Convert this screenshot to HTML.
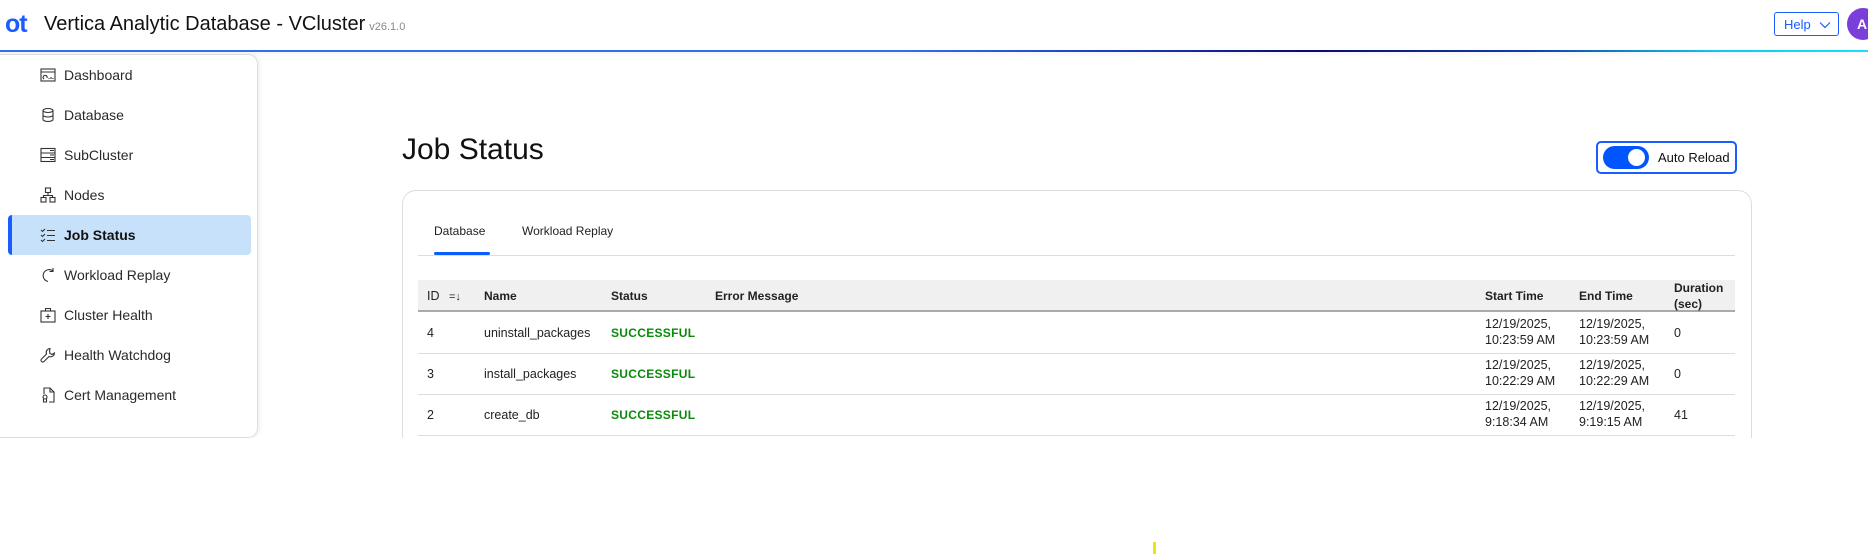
<!DOCTYPE html>
<html><head><meta charset="utf-8">
<style>
*{box-sizing:border-box;margin:0;padding:0}
body{width:1868px;height:554px;background:#fff;font-family:"Liberation Sans",Arial,sans-serif;color:#1a1a1a;position:relative;overflow:hidden}
.abs{position:absolute}
.hdr-line{left:0;top:50px;width:1868px;height:2px;background:linear-gradient(90deg,#3070f0 0%,#3070f0 48%,#1c3cb8 60%,#0a0a70 70%,#1040a8 82%,#10c8f0 92%,#18e0f8 100%);box-shadow:0 2px 4px rgba(0,0,0,.08)}
.logo{left:5px;top:11px;font-size:25px;font-weight:bold;color:#1a5cff;letter-spacing:-1px;line-height:26px}
.title{left:44px;top:13px;font-size:20px;color:#111}
.ver{font-size:11px;color:#888;margin-left:4px}
.help{left:1774px;top:12px;width:65px;height:24px;border:1px solid #1a5cff;border-radius:3px;color:#1a5cff;font-size:13px;padding:4px 0 0 9px;white-space:nowrap}
.avatar{left:1847px;top:8px;width:32px;height:32px;border-radius:50%;background:#7b3fd9;color:#fff;font-size:14px;font-weight:bold;padding:8px 0 0 10px}
.side{left:-10px;top:54px;width:268px;height:384px;border:1px solid #ddd;border-radius:10px;box-shadow:2px 0 4px rgba(0,0,0,.06);background:#fff}
.item{position:absolute;left:64px;font-size:14px;color:#2a2a2a;height:20px;line-height:20px}
.ico{position:absolute;left:40px;width:16px;height:16px}
.active{left:8px;top:215px;width:243px;height:40px;background:#c8e1fb;border-radius:4px;border-left:4px solid #1a5cff}
h1{position:absolute;left:402px;top:133px;font-size:30px;font-weight:normal;color:#111}
.ar{left:1596px;top:141px;width:141px;height:33px;border:2px solid #1a5cff;border-radius:5px}
.tog{left:1603px;top:146px;width:46px;height:23px;border-radius:12px;background:#0055ff}
.knob{left:1628px;top:149px;width:17px;height:17px;border-radius:50%;background:#fff}
.card{left:402px;top:190px;width:1350px;height:300px;border:1px solid #ddd;border-radius:14px}
.tabline{left:418px;top:255px;width:1317px;height:1px;background:#ddd}
.tabu{left:434px;top:252px;width:56px;height:3px;background:#0a5cff;border-radius:2px}
.th{left:418px;top:280px;width:1317px;height:32px;background:#f0f0f0;border-bottom:2px solid #aaa}
.t{position:absolute;font-size:12.5px;color:#222;line-height:16px}
.b{font-weight:bold;font-size:12px}
.rl{position:absolute;left:418px;width:1317px;height:1px;background:#ddd}
.ok{color:#0a8a0a;font-weight:bold;font-size:12px;letter-spacing:.3px}
</style></head><body>
<div class="abs logo">ot</div>
<div class="abs title">Vertica Analytic Database - VCluster<span class="ver">v26.1.0</span></div>
<div class="abs help">Help<svg width="12" height="8" style="margin-left:8px" viewBox="0 0 12 8"><path d="M1 1.5l5 5 5-5" fill="none" stroke="#1a5cff" stroke-width="1.2"/></svg></div>
<div class="abs avatar">A</div>
<div class="abs hdr-line"></div>

<div class="abs side"></div>
<div class="abs active"></div>
<svg class="ico" style="top:67px" viewBox="0 0 16 16" fill="none" stroke="#333" stroke-width="1.1"><rect x="1" y="2" width="14" height="12"/><path d="M1 5h14M4 12a2 2 0 1 1 3-1M9 12v-1M11 12v-2M13 12v-1"/></svg>
<div class="item" style="top:65px">Dashboard</div>
<svg class="ico" style="top:107px" viewBox="0 0 16 16" fill="none" stroke="#333" stroke-width="1.1"><ellipse cx="8" cy="3.5" rx="5" ry="2"/><path d="M3 3.5v9c0 1.1 2.2 2 5 2s5-.9 5-2v-9M3 8c0 1.1 2.2 2 5 2s5-.9 5-2"/></svg>
<div class="item" style="top:105px">Database</div>
<svg class="ico" style="top:147px" viewBox="0 0 16 16" fill="none" stroke="#333" stroke-width="1.1"><rect x="1" y="1.5" width="14" height="13"/><path d="M1 6h14M1 10.5h14M10 3.5h4M10 8h4M10 12.5h4"/></svg>
<div class="item" style="top:145px">SubCluster</div>
<svg class="ico" style="top:187px" viewBox="0 0 16 16" fill="none" stroke="#333" stroke-width="1.1"><rect x="5.5" y="1" width="5" height="4.5"/><rect x="1" y="10.5" width="5" height="4.5"/><rect x="10" y="10.5" width="5" height="4.5"/><path d="M8 5.5v3M3.5 10.5v-2h9v2"/></svg>
<div class="item" style="top:185px">Nodes</div>
<svg class="ico" style="top:227px" viewBox="0 0 16 16" fill="none" stroke="#333" stroke-width="1.1"><path d="M1 3l1.5 1.5L5 2M1 8l1.5 1.5L5 7M1 13l1.5 1.5L5 12M7 3.5h8M7 8.5h8M7 13.5h8"/></svg>
<div class="item" style="top:225px;color:#111;font-weight:bold">Job Status</div>
<svg class="ico" style="top:267px" viewBox="0 0 16 16" fill="none" stroke="#333" stroke-width="1.1"><path d="M13 4A6 6 0 1 0 8 14.5M13 1v3.5H9.5"/></svg>
<div class="item" style="top:265px">Workload Replay</div>
<svg class="ico" style="top:307px" viewBox="0 0 16 16" fill="none" stroke="#333" stroke-width="1.1"><rect x="1" y="4" width="14" height="11"/><path d="M5.5 4V1.5h5V4M8 7v5M5.5 9.5h5"/></svg>
<div class="item" style="top:305px">Cluster Health</div>
<svg class="ico" style="top:347px" viewBox="0 0 16 16" fill="none" stroke="#333" stroke-width="1.1"><path d="M10 1.5a4 4 0 0 0-3.5 5.5L1.5 12a1.5 1.5 0 0 0 2.5 2.5L9 9.5a4 4 0 0 0 5.5-3.5l-2.5 1.5-2-1-.5-2.5z"/></svg>
<div class="item" style="top:345px">Health Watchdog</div>
<svg class="ico" style="top:387px" viewBox="0 0 16 16" fill="none" stroke="#333" stroke-width="1.1"><path d="M4 7V1h6l4 4v10H9M10 1v4h4"/><circle cx="5" cy="10" r="2"/><path d="M3.5 11.5V15h3v-3.5"/></svg>
<div class="item" style="top:385px">Cert Management</div>

<h1>Job Status</h1>
<div class="abs ar"></div>
<div class="abs tog"></div>
<div class="abs knob"></div>
<div class="abs" style="left:1658px;top:150px;font-size:13px;color:#111">Auto Reload</div>

<div class="abs card"></div>
<div class="abs" style="left:0;top:438px;width:1868px;height:116px;background:#fff"></div>
<div class="abs" style="left:1153px;top:542px;width:3px;height:12px;background:#f5e400"></div>
<div class="t" style="left:434px;top:223px;font-size:12px">Database</div>
<div class="t" style="left:522px;top:223px;font-size:12px">Workload Replay</div>
<div class="abs tabline"></div>
<div class="abs tabu"></div>

<div class="abs th"></div>
<div class="t" style="left:427px;top:288px">ID <span style="margin-left:6px;font-size:11px">=↓</span></div>
<div class="t b" style="left:484px;top:288px">Name</div>
<div class="t b" style="left:611px;top:288px">Status</div>
<div class="t b" style="left:715px;top:288px">Error Message</div>
<div class="t b" style="left:1485px;top:288px">Start Time</div>
<div class="t b" style="left:1579px;top:288px">End Time</div>
<div class="t b" style="left:1674px;top:280px">Duration<br>(sec)</div>

<div class="t" style="left:427px;top:325px">4</div>
<div class="t" style="left:484px;top:325px">uninstall_packages</div>
<div class="t ok" style="left:611px;top:325px">SUCCESSFUL</div>
<div class="t" style="left:1485px;top:316px">12/19/2025,<br>10:23:59 AM</div>
<div class="t" style="left:1579px;top:316px">12/19/2025,<br>10:23:59 AM</div>
<div class="t" style="left:1674px;top:325px">0</div>
<div class="rl" style="top:353px"></div>

<div class="t" style="left:427px;top:366px">3</div>
<div class="t" style="left:484px;top:366px">install_packages</div>
<div class="t ok" style="left:611px;top:366px">SUCCESSFUL</div>
<div class="t" style="left:1485px;top:357px">12/19/2025,<br>10:22:29 AM</div>
<div class="t" style="left:1579px;top:357px">12/19/2025,<br>10:22:29 AM</div>
<div class="t" style="left:1674px;top:366px">0</div>
<div class="rl" style="top:394px"></div>

<div class="t" style="left:427px;top:407px">2</div>
<div class="t" style="left:484px;top:407px">create_db</div>
<div class="t ok" style="left:611px;top:407px">SUCCESSFUL</div>
<div class="t" style="left:1485px;top:398px">12/19/2025,<br>9:18:34 AM</div>
<div class="t" style="left:1579px;top:398px">12/19/2025,<br>9:19:15 AM</div>
<div class="t" style="left:1674px;top:407px">41</div>
<div class="rl" style="top:435px"></div>
</body></html>
